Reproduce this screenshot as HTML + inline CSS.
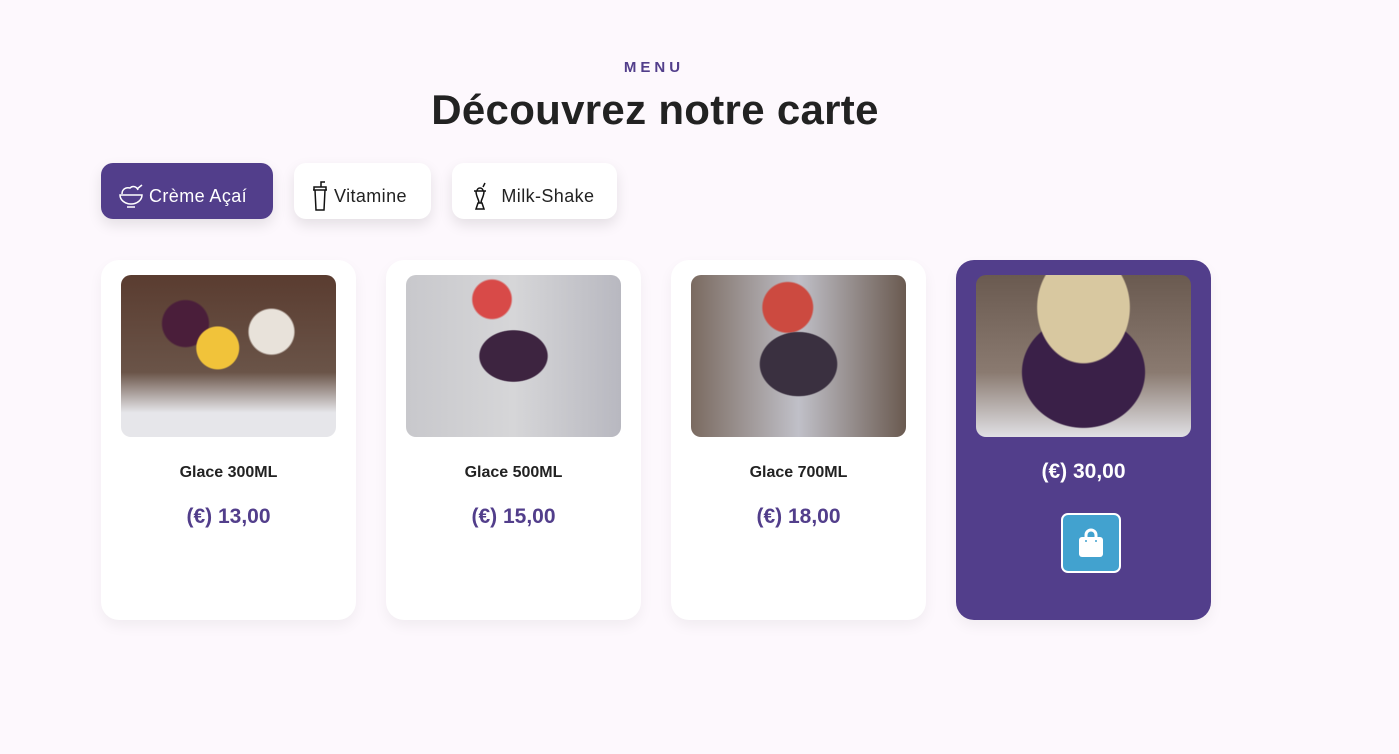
<!DOCTYPE html>
<html><head><meta charset="utf-8"><style>
*{margin:0;padding:0;box-sizing:border-box}
body{width:1399px;height:754px;background:#fdf8fd;font-family:"Liberation Sans",sans-serif;position:relative;overflow:hidden;color:#222}
.sub{position:absolute;top:59px;left:0;width:1308px;text-align:center;font-size:15px;font-weight:bold;letter-spacing:4px;color:#523e8b}
h1{position:absolute;top:86px;left:0;width:1310px;text-align:center;font-size:42px;font-weight:bold;color:#222;letter-spacing:0.3px}
.tab{position:absolute;top:163px;height:56px;border-radius:12px;background:#fff;box-shadow:0 6px 14px rgba(0,0,0,.1);font-size:18px;letter-spacing:0.4px;display:flex;align-items:center;padding:10px 14px 0 16px;gap:4px}
.tab.on{background:#523e8b;color:#fff}
.card{position:absolute;top:260px;width:255px;height:360px;border-radius:18px;background:#fff;box-shadow:0 6px 14px rgba(0,0,0,.05)}
.card.on{background:#523e8b}
.img{position:absolute;left:20px;top:15px;width:215px;height:162px;border-radius:10px;overflow:hidden}
.name{position:absolute;top:204px;width:100%;text-align:center;font-size:16px;font-weight:bold}
.price{position:absolute;top:245px;width:100%;text-align:center;font-size:21px;font-weight:bold;color:#523e8b}
.on .price{top:200px;color:#fff}
.bag{position:absolute;left:105px;top:253px;width:60px;height:60px;border:2px solid #fff;border-radius:7px;background:#42a2cf;display:flex;align-items:center;justify-content:center}
</style></head><body>
<div class="sub">MENU</div>
<h1>Découvrez notre carte</h1>
<div class="tab on" style="left:101px;width:172px"><svg width="28" height="26" viewBox="0 0 28 26" fill="none" stroke="#fff" stroke-width="1.5"><path d="M3 12h22a11 9 0 0 1-22 0zM10 24h8M5 11c0-5 4-7 8-6 3-3 7-1 8 2M20 6l5-4"/></svg>Crème Açaí</div>
<div class="tab" style="left:294px;width:137px"><svg width="20" height="32" viewBox="0 0 20 32" fill="none" stroke="#111" stroke-width="1.5"><path d="M3 10h14M5 10l1 20h8l1-20M4 10V7h12v3M11 7V2h4"/></svg>Vitamine</div>
<div class="tab" style="left:452px;width:165px"><svg width="24" height="30" viewBox="0 0 24 30" fill="none" stroke="#111" stroke-width="1.5"><path d="M6 10h12M8 10c0 6 3 8 3 12h2c0-4 3-6 3-12M8 28h8l-2-6h-4zM9 10c0-4 6-4 6 0M15 6l2-4"/></svg>&nbsp;Milk-Shake</div>

<div class="card" style="left:101px"><div class="img" style="background:radial-gradient(circle at 45% 45%,#f1c33a 0 14%,transparent 15%),radial-gradient(circle at 30% 30%,#4a1e3a 0 12%,transparent 13%),radial-gradient(circle at 70% 35%,#e8e2da 0 12%,transparent 13%),linear-gradient(#5a3c30,#6a5448 60%,#e6e6ea 85%)"></div><div class="name">Glace 300ML</div><div class="price">(€) 13,00</div></div>
<div class="card" style="left:386px"><div class="img" style="background:radial-gradient(ellipse at 50% 50%,#3d2440 0 22%,transparent 23%),radial-gradient(circle at 40% 15%,#d84a48 0 10%,transparent 11%),linear-gradient(90deg,#c8c8cc,#d6d6d8 50%,#b8b8c0)"></div><div class="name">Glace 500ML</div><div class="price">(€) 15,00</div></div>
<div class="card" style="left:671px"><div class="img" style="background:radial-gradient(ellipse at 50% 55%,#3a3040 0 25%,transparent 26%),radial-gradient(circle at 45% 20%,#cc4a40 0 14%,transparent 15%),linear-gradient(90deg,#7a6a60,#c0c0c8 50%,#6a5a50)"></div><div class="name">Glace 700ML</div><div class="price">(€) 18,00</div></div>
<div class="card on" style="left:956px"><div class="img" style="background:radial-gradient(ellipse at 50% 20%,#d8c8a0 0 30%,transparent 31%),radial-gradient(ellipse at 50% 60%,#3a2048 0 40%,transparent 41%),linear-gradient(#6a5a50,#8a7a70 60%,#e0e0e4)"></div><div class="price">(€) 30,00</div><div class="bag"><svg width="28" height="30" viewBox="0 0 28 30"><path d="M9 10V7a5 5 0 0 1 10 0v3" fill="none" stroke="#fff" stroke-width="3"/><rect x="2" y="9" width="24" height="20" rx="3" fill="#fff"/><circle cx="9" cy="13" r="1" fill="#42a2cf"/><circle cx="19" cy="13" r="1" fill="#42a2cf"/></svg></div></div>
</body></html>
